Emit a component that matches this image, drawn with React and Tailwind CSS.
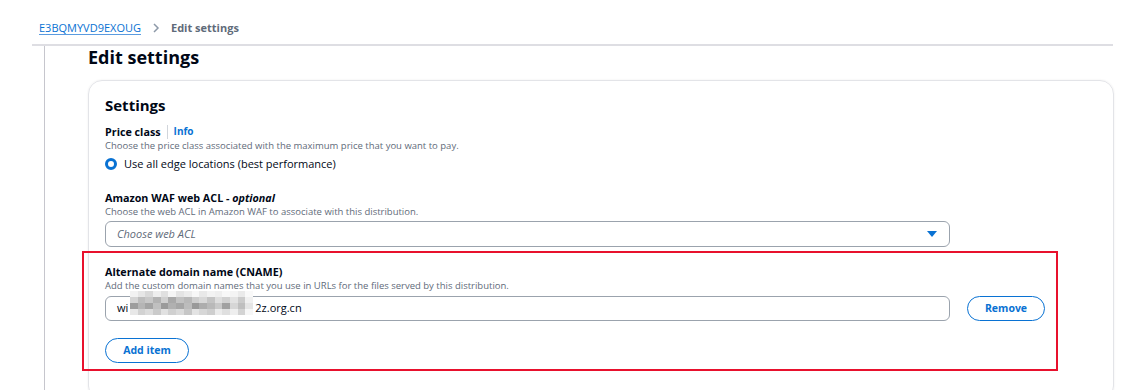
const FONT = { fontFamily: '"Open Sans", "Noto Sans", Arial, sans-serif' }

const MOSAIC = [
  ['#f2f2f2', '#e6e6e6', '#d9d9d9', '#eeeeee', '#e0e0e0', '#f5f5f5', '#e4e4e4', '#ececec', '#f7f7f7', '#e9e9e9', '#f3f3f3', '#efefef', '#f8f8f8', '#f4f4f4', '#eaeaea', '#f9f9f9'],
  ['#d4d4d4', '#bdbdbd', '#c8c8c8', '#b3b3b3', '#cfcfcf', '#a9a9a9', '#c2c2c2', '#b8b8b8', '#cdcdcd', '#d8d8d8', '#c4c4c4', '#dedede', '#d1d1d1', '#e2e2e2', '#cbcbcb', '#f0f0f0'],
  ['#9d9d9d', '#b5b5b5', '#a4a4a4', '#c0c0c0', '#9a9a9a', '#b0b0b0', '#a6a6a6', '#bcbcbc', '#999999', '#adadad', '#b9b9b9', '#c9c9c9', '#a1a1a1', '#d6d6d6', '#bfbfbf', '#e5e5e5'],
  ['#e8e8e8', '#d2d2d2', '#dcdcdc', '#cacaca', '#e1e1e1', '#d0d0d0', '#dadada', '#c6c6c6', '#e3e3e3', '#d7d7d7', '#cecece', '#ebebeb', '#dfdfdf', '#eeeeee', '#d3d3d3', '#f6f6f6'],
]

const Mosaic = () => (
  <div className="absolute left-[130px] top-[291px] flex flex-col">
    {MOSAIC.map((row, i) => (
      <div key={i} className="flex">
        {row.map((c, j) => (
          <div key={j} className="w-[7.7px] h-[6px]" style={{ background: c }} />
        ))}
      </div>
    ))}
  </div>
)

const Label = ({ children }) => (
  <div className="text-[10.75px] font-bold text-[#000716] leading-[14px]">{children}</div>
)

const Desc = ({ children }) => (
  <div className="text-[9.5px] text-[#5f6b7a] leading-[14px]">{children}</div>
)

export default function App() {
  return (
    <div className="relative w-[1121px] h-[390px] overflow-hidden bg-white" style={FONT}>
      <div className="h-[44px] pl-[39px] pt-[20px] flex items-start gap-[10px] text-[11px] leading-[16px]">
        <span className="text-[#0972d3] underline underline-offset-2 decoration-[#5a9be0]">E3BQMYVD9EXOUG</span>
        <svg width="10" height="12" viewBox="0 0 10 12" className="mt-[2px]">
          <path d="M3 2l4 4-4 4" fill="none" stroke="#8d99a8" strokeWidth="1.5" />
        </svg>
        <span className="font-bold text-[#5f6b7a]">Edit settings</span>
      </div>
      <div className="ml-[32px] w-[1081px] h-[2px] bg-[#dedee3]" />
      <div className="flex">
        <div className="ml-[44px] w-px h-[346px] bg-[#c6c6cd]" />
        <div className="ml-[43px] flex-1 min-w-0">
          <h1 className="text-[18px] font-bold text-[#000716] leading-[22px] h-[34px]">Edit settings</h1>
          <div className="w-[1026px] h-[320px] border border-[#e3e4e8] rounded-[14px] px-[16px] pt-[13px] shadow-[0_0_2px_rgba(0,7,22,0.08)]">
            <div className="text-[15px] font-bold text-[#000716] leading-[22px]">Settings</div>
            <div className="mt-[8px] flex items-center">
              <Label>Price class</Label>
              <div className="w-px h-[14px] bg-[#d1d5db] mx-[6px]" />
              <span className="text-[10px] font-bold text-[#0972d3]">Info</span>
            </div>
            <Desc>Choose the price class associated with the maximum price that you want to pay.</Desc>
            <div className="mt-[3px] flex items-center gap-[7px]">
              <div className="w-[12px] h-[12px] rounded-full border-[3.5px] border-[#0972d3]" />
              <span className="text-[11px] text-[#000716] leading-[16px]">Use all edge locations (best performance)</span>
            </div>

            <div className="mt-[19px]">
              <Label>
                Amazon WAF web ACL - <i>optional</i>
              </Label>
            </div>
            <Desc>Choose the web ACL in Amazon WAF to associate with this distribution.</Desc>
            <div className="mt-[2px] w-[845px] h-[26px] border border-[#9ba3ad] rounded-[6px] flex items-center justify-between pl-[11px] pr-[12px]">
              <span className="text-[11px] italic text-[#5f6b7a]">Choose web ACL</span>
              <svg width="10" height="7" viewBox="0 0 10 7">
                <path d="M0 0h10L5 6z" fill="#0972d3" />
              </svg>
            </div>

            <div className="mt-[18px]">
              <Label>Alternate domain name (CNAME)</Label>
            </div>
            <Desc>Add the custom domain names that you use in URLs for the files served by this distribution.</Desc>
            <div className="mt-[3px] flex items-center gap-[17px]">
              <div className="w-[845px] h-[25px] border border-[#9ba3ad] rounded-[6px] flex items-center pl-[11px]">
                <span className="text-[11px] text-[#000716]">wi</span>
                <span className="ml-[127px] text-[11px] text-[#000716]">2z.org.cn</span>
              </div>
              <button className="w-[78px] h-[25px] rounded-full border-[1.5px] border-[#0972d3] text-[10.5px] font-bold text-[#0972d3]">
                Remove
              </button>
            </div>
            <button className="mt-[17px] w-[84px] h-[25px] rounded-full border-[1.5px] border-[#0972d3] text-[10.5px] font-bold text-[#0972d3]">
              Add item
            </button>
          </div>
        </div>
      </div>
      <Mosaic />
      <div className="absolute left-[82px] top-[251px] w-[976px] h-[120px] border-2 border-[#e8112d] pointer-events-none" />
    </div>
  )
}
